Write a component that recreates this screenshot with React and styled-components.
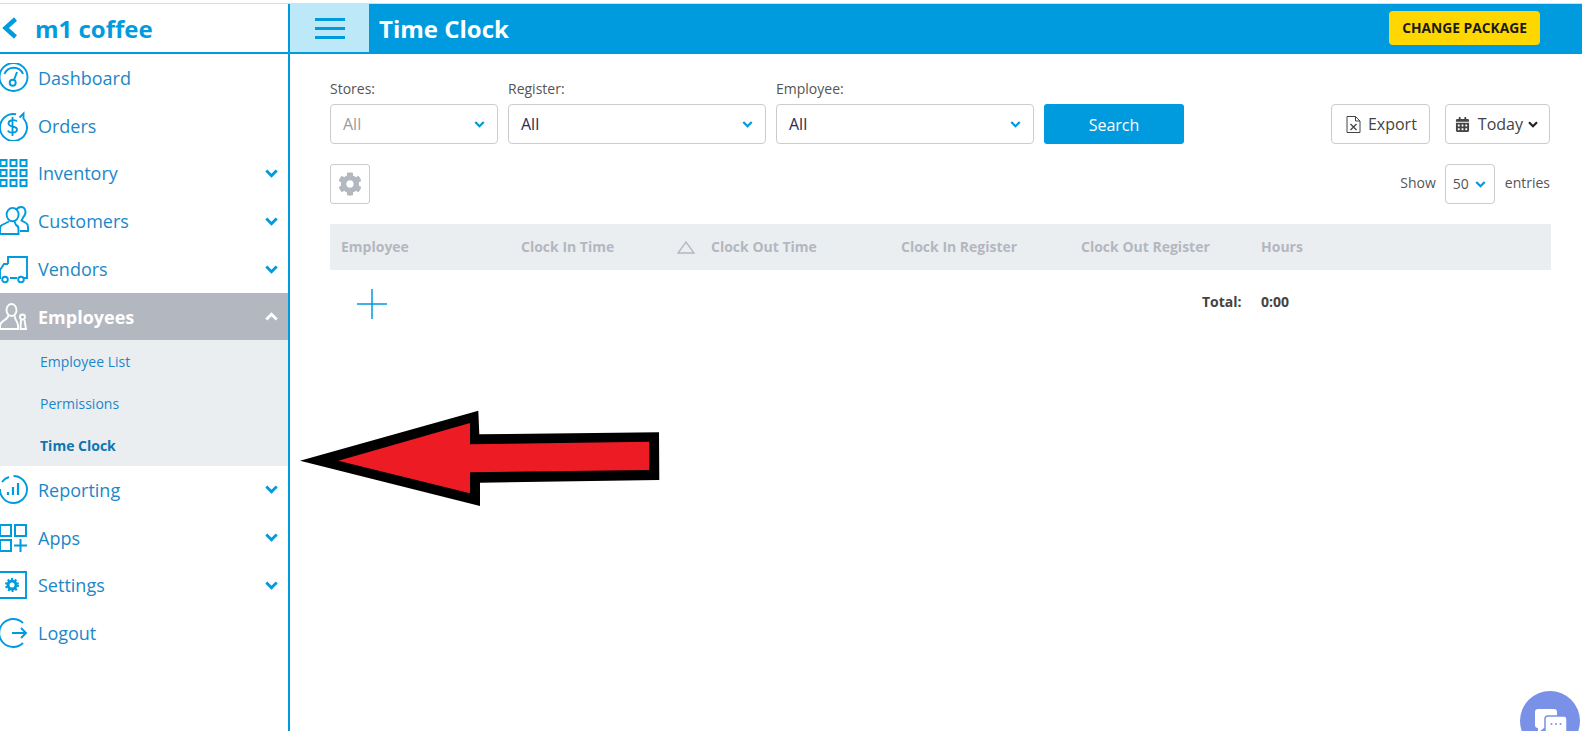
import React from 'react';
import styled, { createGlobalStyle } from 'styled-components';
import { FaCog, FaCalendarAlt } from 'react-icons/fa';

const BLUE = '#009bde';
const LINK = '#1b87c9';

const GlobalStyle = createGlobalStyle`
  html, body {
    margin: 0;
    height: 100%;
    overflow: hidden;
    background: #fff;
  }
  body {
    font-family: "Open Sans", "Liberation Sans", sans-serif;
  }
  #root {
    height: 100%;
  }
`;

const Page = styled.div`
  position: relative;
  height: 731px;
  overflow: hidden;
  display: flex;
  flex-direction: column;
  padding-top: 3px;
  box-sizing: border-box;
`;

const TopLine = styled.div`
  height: 1px;
  background: #dcdcdc;
`;

const Body = styled.div`
  flex: 1;
  display: flex;
  min-height: 0;
`;

const Sidebar = styled.aside`
  width: 290px;
  flex: none;
  box-sizing: border-box;
  border-right: 2px solid ${BLUE};
`;

const Brand = styled.div`
  height: 50px;
  box-sizing: border-box;
  border-bottom: 2px solid ${BLUE};
  display: flex;
  align-items: center;
  padding-left: 2px;
  gap: 17px;
  color: ${BLUE};
  font-size: 24px;
  font-weight: 700;
`;

const NavRow = styled.div`
  height: ${({ $active }) => ($active ? '47px' : '47.8px')};
  padding-top: ${({ $active }) => ($active ? '1px' : '0')};
  box-sizing: border-box;
  display: flex;
  align-items: center;
  font-size: 18px;
  color: ${({ $active }) => ($active ? '#fff' : LINK)};
  font-weight: ${({ $active }) => ($active ? 700 : 400)};
  background: ${({ $active }) => ($active ? '#b3b7c0' : 'transparent')};
`;

const NavIcon = styled.svg`
  width: 30px;
  height: 30px;
  flex: none;
  margin-left: -1px;
  margin-right: 9px;
  fill: none;
  stroke: ${({ $active }) => ($active ? '#fff' : BLUE)};
  stroke-width: 1.9;
`;

const NavLabel = styled.span`
  flex: 1;
`;

const Chevron = styled.svg`
  flex: none;
  width: ${({ $w }) => $w}px;
  height: ${({ $w }) => Math.round($w * 0.66)}px;
  fill: none;
  stroke: ${({ $color }) => $color || BLUE};
  stroke-width: 2.6;
  transform: ${({ $up }) => ($up ? 'rotate(180deg)' : 'none')};
`;

const NavCaret = styled.span`
  display: flex;
  margin-right: 10px;
`;

const SubList = styled.div`
  background: #ebeef1;
`;

const SubItem = styled.div`
  height: 42px;
  padding-top: 1px;
  box-sizing: border-box;
  display: flex;
  align-items: center;
  padding-left: 40px;
  font-size: 14px;
  color: ${({ $current }) => ($current ? '#0f75b0' : LINK)};
  font-weight: ${({ $current }) => ($current ? 700 : 400)};
`;

const Main = styled.main`
  flex: 1;
  min-width: 0;
`;

const Header = styled.header`
  height: 50px;
  box-sizing: border-box;
  background: ${BLUE};
  display: flex;
  align-items: stretch;
  padding-right: 42px;
`;

const MenuButton = styled.div`
  width: 79px;
  height: 48px;
  background: #bde8f7;
  display: flex;
  align-items: center;
  justify-content: center;
`;

const PageTitle = styled.h1`
  flex: 1;
  margin: 0 0 0 10px;
  align-self: center;
  color: #fff;
  font-size: 24px;
  font-weight: 700;
  line-height: 48px;
`;

const PackageButton = styled.div`
  align-self: flex-start;
  margin-top: 7px;
  height: 34px;
  padding: 0 13px 2px;
  box-sizing: border-box;
  display: flex;
  align-items: center;
  border-radius: 4px;
  background: #ffd700;
  color: #1a1a1a;
  font-size: 13.8px;
  font-weight: 700;
`;

const Content = styled.div`
  padding: 24px 31px 0 40px;
`;

const FilterBar = styled.div`
  display: flex;
  align-items: flex-end;
  gap: 10px;
`;

const Field = styled.label`
  width: ${({ $w }) => $w}px;
  display: flex;
  flex-direction: column;
  gap: 5px;
  font-size: 14px;
  line-height: 21px;
  color: #555;
`;

const Select = styled.div`
  height: 40px;
  box-sizing: border-box;
  display: flex;
  align-items: center;
  justify-content: space-between;
  padding: 0 12px;
  border: 1px solid #ccc;
  border-radius: 4px;
  background: #fff;
  font-size: 16px;
  color: ${({ $muted }) => ($muted ? '#9a9a9a' : '#2b2b52')};
`;

const SearchButton = styled.div`
  width: 140px;
  height: 40px;
  padding-top: 1px;
  box-sizing: border-box;
  display: flex;
  align-items: center;
  justify-content: center;
  border-radius: 3px;
  background: ${BLUE};
  color: #fff;
  font-size: 16px;
`;

const Actions = styled.div`
  margin-left: auto;
  margin-right: 1px;
  display: flex;
  gap: 15px;
`;

const OutlineButton = styled.div`
  height: 40px;
  box-sizing: border-box;
  display: flex;
  align-items: center;
  gap: ${({ $gap }) => $gap}px;
  padding: 0 ${({ $right }) => $right}px 0 ${({ $left }) => $left}px;
  border: 1px solid #ccc;
  border-radius: 4px;
  font-size: 16px;
  color: #444;
`;

const TodayLabel = styled.span`
  margin-right: -3px;
`;

const FileIcon = styled.svg`
  width: 15px;
  height: 17px;
  flex: none;
  fill: none;
  stroke: #444;
  stroke-width: 1;
`;

const ToolRow = styled.div`
  margin-top: 20px;
  display: flex;
  align-items: center;
  justify-content: space-between;
`;

const GearButton = styled.div`
  width: 40px;
  height: 40px;
  box-sizing: border-box;
  display: flex;
  align-items: center;
  justify-content: center;
  border: 1px solid #ccc;
  border-radius: 3px;
  color: #b3b7c0;
  font-size: 24px;
`;

const Entries = styled.div`
  display: flex;
  align-items: center;
  gap: 9px;
  margin-right: 1px;
  font-size: 14px;
  line-height: 18px;
  color: #555;
`;

const EntrySelect = styled.div`
  width: 50px;
  height: 40px;
  box-sizing: border-box;
  display: flex;
  align-items: center;
  gap: 6px;
  padding-left: 7px;
  margin-right: 1px;
  border: 1px solid #ccc;
  border-radius: 4px;
`;

const EntryText = styled.span`
  padding-bottom: 2px;
`;

const TableHead = styled.div`
  margin-top: 20px;
  height: 46px;
  box-sizing: border-box;
  padding: 0 0 2px 11px;
  display: grid;
  grid-template-columns: 180px 190px 190px 180px 180px 1fr;
  align-items: center;
  background: #ebeef1;
  color: #b3b7c0;
  font-size: 14px;
  font-weight: 700;
`;

const HeadCell = styled.div`
  position: relative;
`;

const SortMark = styled.svg`
  position: absolute;
  left: -34px;
  top: 4px;
  width: 18px;
  height: 13px;
  fill: none;
  stroke: #b3b7c0;
  stroke-width: 1.3;
`;

const TableFoot = styled.div`
  height: 68px;
  display: grid;
  grid-template-columns: 872px 59px 1fr;
  align-items: center;
  font-size: 14px;
  font-weight: 700;
  color: #444;
`;

const TotalCell = styled.span`
  padding-bottom: 6px;
`;

const AddIcon = styled.svg`
  width: 30px;
  height: 30px;
  margin-left: 27px;
  stroke: ${BLUE};
  stroke-width: 1.5;
`;

const Pointer = styled.svg`
  position: absolute;
  left: 295px;
  top: 405px;
  width: 370px;
  height: 105px;
`;

const ChatBubble = styled.div`
  position: absolute;
  left: 1520px;
  top: 691px;
  width: 60px;
  height: 60px;
  border-radius: 50%;
  background: #7a91e8;
`;

const ChatIcon = styled.svg`
  position: absolute;
  left: 15px;
  top: 18px;
  width: 32px;
  height: 30px;
`;

const icons = {
  dashboard: (
    <>
      <circle cx="14.5" cy="14" r="14" />
      <path d="M5.5 11A10 10 0 0 1 24 11" />
      <circle cx="13.7" cy="19.7" r="3" />
      <path d="M15 17L18 9" />
    </>
  ),
  orders: (
    <>
      <path d="M17 3.2A13.5 13.5 0 1 0 25 8" />
      <path d="M20.5 6.5L24.5 2.5V8.5" />
      <path d="M18 10.5C16.5 8.5 9.5 8.5 9.5 12.5C9.5 16.5 18 14.5 18 18.5C18 22.5 10 22.5 9 19.5M13.5 6V25" strokeWidth="1.8" />
    </>
  ),
  inventory: (
    <>
      {[2, 12, 22].flatMap((y) =>
        [1.5, 11.5, 21.5].map((x) => <rect key={`${x}-${y}`} x={x} y={y} width="6" height="6" strokeWidth="2" />)
      )}
    </>
  ),
  customers: (
    <>
      <ellipse cx="13.6" cy="8.6" rx="6" ry="6.7" />
      <path d="M10 15.5L3 19Q1 20 1 23V28H19.5V23Q19.5 20 17 19L15.5 15.5" />
      <path d="M17 4Q19 1 22 1C27 1 28 8 24 11.5L22.5 14.5L27 17Q29 18 29 21V25H21" />
    </>
  ),
  vendors: (
    <>
      <path d="M9 10V3H28V24H25M18 24H11" />
      <path d="M9 10H5L1 16V24H2" />
      <circle cx="6" cy="25.5" r="2.8" />
      <circle cx="22" cy="25.5" r="2.8" />
    </>
  ),
  employees: (
    <>
      <ellipse cx="12.5" cy="8" rx="5" ry="6" />
      <path d="M9.5 13C9.5 18 2 18 1 23V27H19V23C18 18 15.5 18 15.5 13" />
      <circle cx="23.5" cy="15" r="2.5" />
      <path d="M22 18L21.5 27H27L25.5 18" />
    </>
  ),
  reporting: (
    <>
      <path d="M14.5 1A13.5 13.5 0 0 1 14.5 28A13.5 13.5 0 0 1 1 14" />
      <path d="M3 7A13 13 0 0 1 10 2" />
      <path d="M9 20V17M14 20V12M19 20V8" strokeWidth="2.2" />
    </>
  ),
  apps: (
    <>
      <rect x="1" y="2" width="11" height="11" strokeWidth="2" />
      <rect x="16" y="2" width="11" height="11" strokeWidth="2" />
      <rect x="1" y="17" width="11" height="11" strokeWidth="2" />
      <path d="M21.5 16V29M15 22.5H28" strokeWidth="2" />
    </>
  ),
  settings: (
    <>
      <path d="M0 2H27V28H0" />
      <circle cx="13" cy="15" r="4" strokeWidth="3" />
      <circle cx="13" cy="15" r="6" strokeWidth="2" strokeDasharray="2 1.8" />
    </>
  ),
  logout: (
    <>
      <path d="M24 5A14 14 0 1 0 24 25" />
      <path d="M13 15H27M22 10L27 15L22 20" />
    </>
  ),
};

const navTop = [
  { id: 'dashboard', label: 'Dashboard' },
  { id: 'orders', label: 'Orders' },
  { id: 'inventory', label: 'Inventory', caret: true },
  { id: 'customers', label: 'Customers', caret: true },
  { id: 'vendors', label: 'Vendors', caret: true },
];

const navBottom = [
  { id: 'reporting', label: 'Reporting', caret: true },
  { id: 'apps', label: 'Apps', caret: true },
  { id: 'settings', label: 'Settings', caret: true },
  { id: 'logout', label: 'Logout' },
];

const Caret = ({ w = 12, color, up }) => (
  <Chevron viewBox="0 0 12 8" $w={w} $color={color} $up={up}>
    <polyline points="1.2,1.2 6,6 10.8,1.2" />
  </Chevron>
);

const NavItem = ({ id, label, caret, active }) => (
  <NavRow $active={active}>
    <NavIcon viewBox="0 0 30 30" $active={active}>{icons[id]}</NavIcon>
    <NavLabel>{label}</NavLabel>
    {caret && (
      <NavCaret>
        <Caret w={13} color={active ? '#fff' : BLUE} up={active} />
      </NavCaret>
    )}
  </NavRow>
);

const App = () => {
  return (
    <Page>
      <GlobalStyle />
      <TopLine />
      <Body>
        <Sidebar>
          <Brand>
            <svg width="16" height="22" viewBox="0 0 16 22" fill="none" stroke={BLUE} strokeWidth="4.4">
              <polyline points="13.5,2 3.5,11 13.5,20" />
            </svg>
            <span>m1 coffee</span>
          </Brand>
          {navTop.map((item) => <NavItem key={item.id} {...item} />)}
          <NavItem id="employees" label="Employees" caret active />
          <SubList>
            <SubItem>Employee List</SubItem>
            <SubItem>Permissions</SubItem>
            <SubItem $current>Time Clock</SubItem>
          </SubList>
          {navBottom.map((item) => <NavItem key={item.id} {...item} />)}
        </Sidebar>
        <Main>
          <Header>
            <MenuButton>
              <svg width="30" height="21" viewBox="0 0 30 21" fill={BLUE}>
                <rect y="0" width="30" height="3" />
                <rect y="9" width="30" height="3" />
                <rect y="18" width="30" height="3" />
              </svg>
            </MenuButton>
            <PageTitle>Time Clock</PageTitle>
            <PackageButton>CHANGE PACKAGE</PackageButton>
          </Header>
          <Content>
            <FilterBar>
              <Field $w={168}>
                Stores:
                <Select $muted>All<Caret w={11} /></Select>
              </Field>
              <Field $w={258}>
                Register:
                <Select>All<Caret w={11} /></Select>
              </Field>
              <Field $w={258}>
                Employee:
                <Select>All<Caret w={11} /></Select>
              </Field>
              <SearchButton>Search</SearchButton>
              <Actions>
                <OutlineButton $left={14} $right={12} $gap={7}>
                  <FileIcon viewBox="0 0 15 17">
                    <path d="M1 .5H9.5L14 5V16.5H1ZM9.5 .5V5H14" />
                    <path d="M4.5 8L10.5 14M10.5 8L4.5 14" strokeWidth="1.3" />
                  </FileIcon>
                  Export
                </OutlineButton>
                <OutlineButton $left={9} $right={11} $gap={8}>
                  <FaCalendarAlt size={15} />
                  <TodayLabel>Today</TodayLabel>
                  <Caret w={10} color="#222" />
                </OutlineButton>
              </Actions>
            </FilterBar>
            <ToolRow>
              <GearButton><FaCog /></GearButton>
              <Entries>
                <EntryText>Show</EntryText>
                <EntrySelect>50<Caret w={11} /></EntrySelect>
                <EntryText>entries</EntryText>
              </Entries>
            </ToolRow>
            <TableHead>
              <HeadCell>Employee</HeadCell>
              <HeadCell>Clock In Time</HeadCell>
              <HeadCell>
                <SortMark viewBox="0 0 18 13"><path d="M9 1L17 12H1Z" /></SortMark>
                Clock Out Time
              </HeadCell>
              <HeadCell>Clock In Register</HeadCell>
              <HeadCell>Clock Out Register</HeadCell>
              <HeadCell>Hours</HeadCell>
            </TableHead>
            <TableFoot>
              <AddIcon viewBox="0 0 30 30"><path d="M15 0V30M0 15H30" /></AddIcon>
              <TotalCell>Total:</TotalCell>
              <TotalCell>0:00</TotalCell>
            </TableFoot>
          </Content>
        </Main>
      </Body>
      <Pointer viewBox="295 405 370 105">
        <polygon points="300,460.7 478.3,410.7 479.3,434.3 659,432.3 659.3,480 480,482.7 480,506" fill="#000" />
        <polygon points="338.3,460.7 470,423 470,444.3 649.3,441.7 649.3,470 470,472.3 470,493.3" fill="#ed1c24" />
      </Pointer>
      <ChatBubble>
        <ChatIcon viewBox="0 0 32 30">
          <path d="M3 0H19C21 0 22 1 22 3V16C22 18 21 19 19 19H9L3 24V19C1 19 0 18 0 16V3C0 1 1 0 3 0Z" fill="#fff" />
          <path d="M13 7H29C31 7 32 8 32 10V30H13C11 30 10 29 10 27V10C10 8 11 7 13 7Z" fill="#fff" stroke="#7a91e8" strokeWidth="1.5" />
          <circle cx="16.5" cy="15" r="1" fill="#7a91e8" />
          <circle cx="21" cy="15" r="1" fill="#7a91e8" />
          <circle cx="25.5" cy="15" r="1" fill="#7a91e8" />
        </ChatIcon>
      </ChatBubble>
    </Page>
  );
};

export default App;
